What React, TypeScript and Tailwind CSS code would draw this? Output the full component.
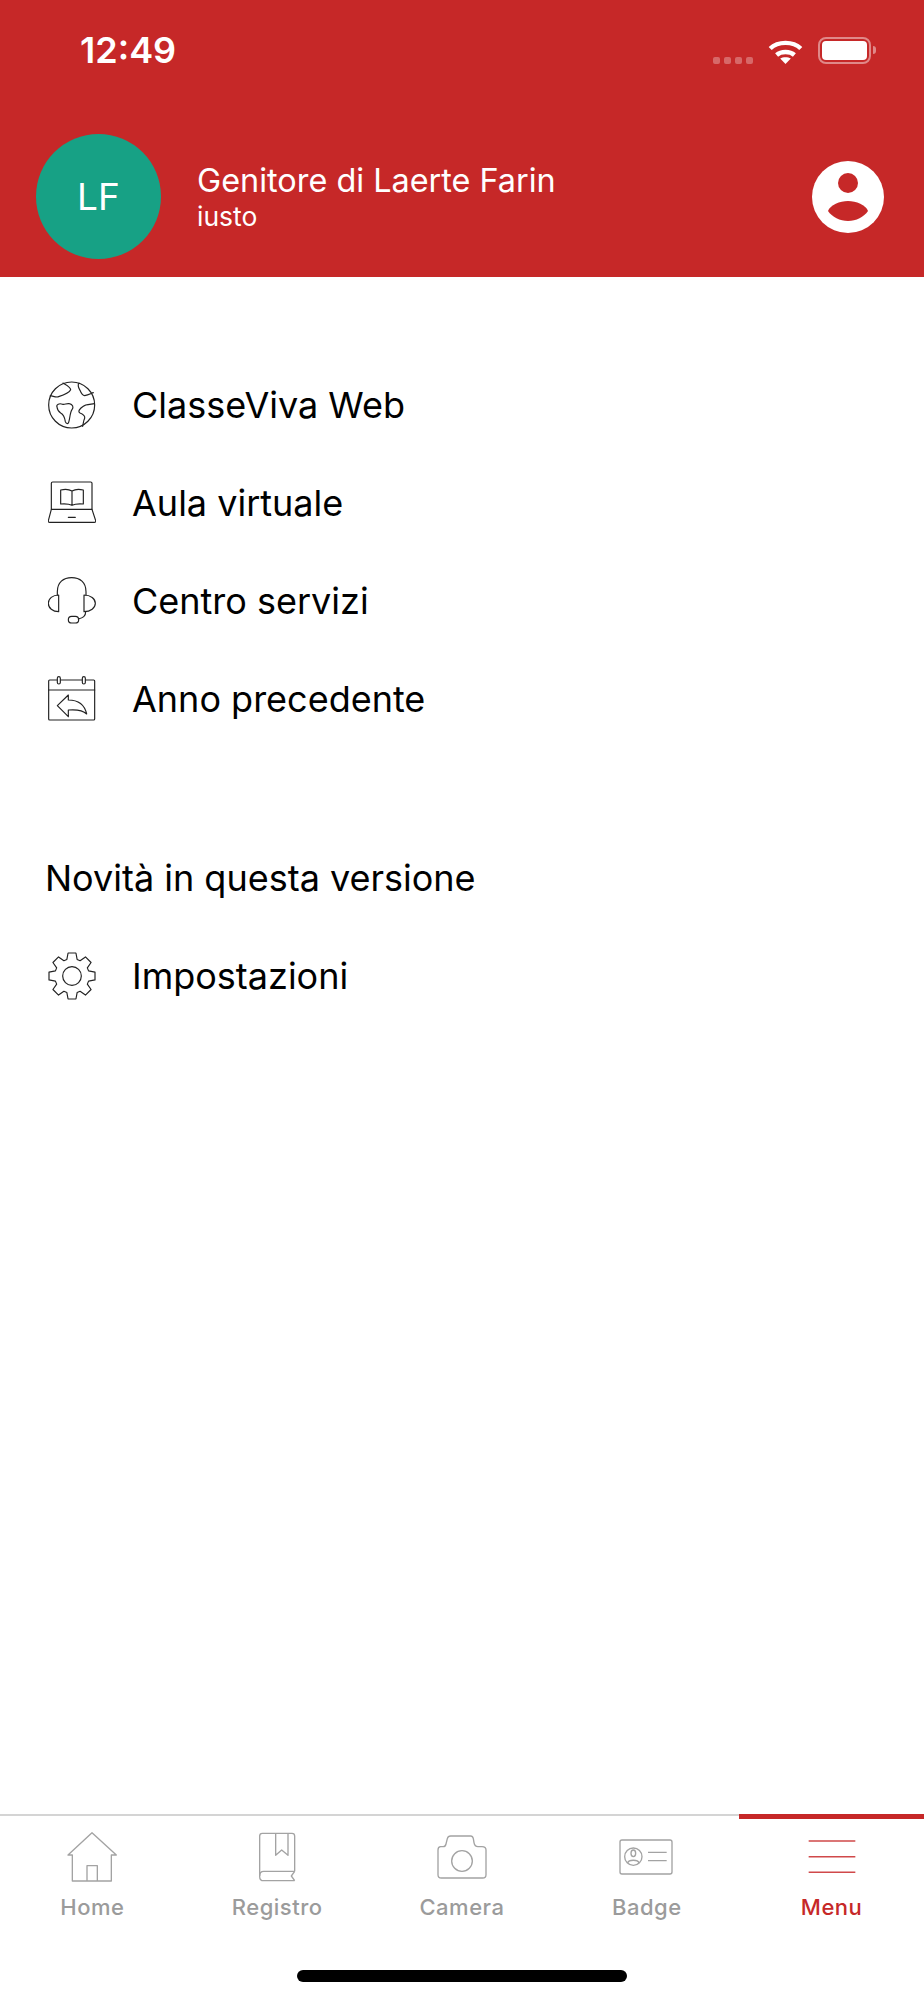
import type { ReactNode } from "react";

const font = "font-['Inter','Liberation_Sans',sans-serif]";

function gearPath() {
  // eight flat teeth around the centre of a 144 box
  const cx = 72;
  const cy = 72;
  const pts: string[] = [];
  for (let i = 0; i < 8; i++) {
    const a = (i * Math.PI) / 4 - Math.PI / 2;
    const list: [number, number][] = [
      [52, -0.3],
      [70, -0.17],
      [70, 0.17],
      [52, 0.3],
    ];
    for (const [r, d] of list) {
      const x = cx + r * Math.cos(a + d);
      const y = cy + r * Math.sin(a + d);
      pts.push(`${x.toFixed(1)} ${y.toFixed(1)}`);
    }
  }
  return `M${pts.join("L")}Z`;
}

function ListIcon({ children }: { children: ReactNode }) {
  return (
    <svg
      viewBox="0 0 144 144"
      className="h-12 w-12 shrink-0"
      fill="none"
      stroke="#222"
      strokeWidth={3.5}
      strokeLinejoin="round"
      strokeLinecap="round"
    >
      {children}
    </svg>
  );
}

function MenuRow({ icon, label }: { icon?: ReactNode; label: string }) {
  return (
    <div className="flex h-[98px] items-center gap-[36px] pl-[48px]">
      {icon}
      <span className="text-[36px] leading-none text-black">{label}</span>
    </div>
  );
}

function TabIcon({ children }: { children: ReactNode }) {
  return (
    <svg
      viewBox="0 0 180 162"
      className="h-[54px] w-[60px]"
      fill="none"
      stroke="#a3a3a3"
      strokeWidth={4}
      strokeLinejoin="round"
    >
      {children}
    </svg>
  );
}

function Tab({ label, active, children }: { label: string; active?: boolean; children: ReactNode }) {
  return (
    <div className="flex flex-col items-center pt-[14px]">
      {children}
      <span className={`mt-[8px] text-[22px] leading-[30px] font-medium tracking-[0.5px] ${active ? "text-[#c62828]" : "text-[#9b9b9b]"}`}>
        {label}
      </span>
    </div>
  );
}

export default function App() {
  return (
    <div className={`flex h-[2000px] w-[924px] flex-col bg-white ${font}`}>
      <header className="h-[277px] bg-[#c62828] text-white">
        <div className="flex h-[100px] items-center justify-between pr-[48px] pl-[80px]">
          <span className="text-[36px] leading-none font-semibold">12:49</span>
          <div className="flex items-end">
            <div className="mr-[15px] flex gap-[4px]">
              <span className="h-[7px] w-[7px] rounded-[2px] bg-white/30" />
              <span className="h-[7px] w-[7px] rounded-[2px] bg-white/30" />
              <span className="h-[7px] w-[7px] rounded-[2px] bg-white/30" />
              <span className="h-[7px] w-[7px] rounded-[2px] bg-white/30" />
            </div>
            <svg viewBox="0 0 35 26" className="mr-[15px] h-[26px] w-[35px]" fill="none" stroke="white" strokeWidth={4.4}>
              <path d="M2.2 10.5C10 3 25 3 32.8 10.5" />
              <path d="M8.6 17C13 13 22 13 26.4 17" />
              <path d="M12.2 20.6C15 18.8 20 18.8 22.8 20.6L17.5 26Z" fill="white" stroke="none" />
            </svg>
            <div className="flex items-center">
              <div className="h-[27px] w-[53px] rounded-[8px] border-2 border-white/45 p-[2px]">
                <div className="h-full w-full rounded-[4px] bg-white" />
              </div>
              <span className="ml-[2px] h-[8px] w-[3px] rounded-r-full bg-white/45" />
            </div>
          </div>
        </div>
        <div className="mt-[34px] flex items-center pr-[40px] pl-[36px]">
          <div className="flex h-[125px] w-[125px] items-center justify-center rounded-full bg-[#17a185] text-[37px]">LF</div>
          <div className="ml-[36px] flex-1">
            <div className="text-[32.4px] leading-[38px]">Genitore di Laerte Farin</div>
            <div className="text-[26.5px] leading-[32px]">iusto</div>
          </div>
          <svg viewBox="0 0 72 72" className="h-[72px] w-[72px]">
            <circle cx="36" cy="36" r="36" fill="white" />
            <circle cx="36" cy="22" r="10" fill="#c62828" />
            <path d="M16 50C18 44 28 40 36 40C44 40 54 44 56 50C52 56 44 60 36 60C28 60 20 56 16 50Z" fill="#c62828" />
          </svg>
        </div>
      </header>

      <main className="flex-1 pt-[79px]">
        <MenuRow
          label="ClasseViva Web"
          icon={
            <ListIcon>
              <circle cx="71" cy="72" r="69" />
              <path d="M45 6C55 12 68 18 68 26C62 38 40 44 28 48C20 48 10 44 7 44" />
              <path d="M93 6C88 12 90 18 96 28C100 38 106 44 110 44C120 42 128 38 136 35" />
              <path d="M27 78C24 70 34 66 44 70C50 72 56 66 64 68C74 70 78 78 72 86C66 94 66 112 62 124C60 130 54 128 52 122C50 108 46 100 38 96C32 92 28 86 27 78Z" />
              <path d="M139 68C125 70 110 70 106 76C96 82 88 92 96 96C106 100 112 104 110 112C106 120 106 128 104 136" />
            </ListIcon>
          }
        />
        <MenuRow
          label="Aula virtuale"
          icon={
            <ListIcon>
              <path d="M10 91V13Q10 9 14 9H128Q132 9 132 13V91Z" />
              <path d="M10 91L1 125Q0 130 5 130H139Q144 130 143 125L132 91" />
              <path d="M61 115H82" />
              <path d="M72 36C62 30 50 30 38 33V75C50 74 62 74 72 79C82 74 94 74 106 75V33C94 30 82 30 72 36ZM72 36V79" />
            </ListIcon>
          }
        />
        <MenuRow
          label="Centro servizi"
          icon={
            <ListIcon>
              <path d="M28 54V44C28 16 46 2 71 2C96 2 114 16 114 44V54" />
              <path d="M32 54V104C14 104 1 93 1 79C1 65 14 54 32 54Z" />
              <path d="M108 54V104C128 104 142 93 142 79C142 65 128 54 108 54Z" />
              <path d="M113 104C113 118 105 122 91 126" />
              <rect x="61" y="118" width="31" height="20" rx="10" />
            </ListIcon>
          }
        />
        <MenuRow
          label="Anno precedente"
          icon={
            <ListIcon>
              <rect x="2" y="15" width="138" height="120" rx="3" />
              <path d="M2 45H140" />
              <rect x="28" y="5" width="9" height="22" rx="4.5" fill="white" />
              <rect x="103" y="5" width="9" height="22" rx="4.5" fill="white" />
              <path d="M28 92L61 60V75C90 75 110 90 116 117C105 106 85 103 61 105V125Z" />
            </ListIcon>
          }
        />
        <div className="mt-[81px] flex h-[98px] items-center pl-[45px]">
          <span className="text-[36px] leading-none text-black">Novità in questa versione</span>
        </div>
        <MenuRow
          label="Impostazioni"
          icon={
            <ListIcon>
              <path d={gearPath()} />
              <circle cx="72" cy="72" r="28" />
            </ListIcon>
          }
        />
      </main>

      <footer className="relative h-[186px] border-t-2 border-[#d4d4d4]">
        <div className="grid grid-cols-5">
          <Tab label="Home">
            <TabIcon>
              <path d="M90 8L18 75H31V153H148V75H163Z" />
              <path d="M75 153V107H106V153" />
            </TabIcon>
          </Tab>
          <Tab label="Registro">
            <TabIcon>
              <path d="M143 124V18Q143 10 135 10H46Q38 10 38 18V140Q38 152 50 152H143" />
              <path d="M143 124H50Q38 124 38 138" />
              <path d="M143 124L133 138L143 152" />
              <path d="M86 10V76L104 60L123 76V10" />
            </TabIcon>
          </Tab>
          <Tab label="Camera">
            <TabIcon>
              <path d="M26 50H34Q40 50 42 42L46 26Q48 18 56 18H116Q122 18 124 26L126 38Q128 50 138 50H150Q162 50 162 60V134Q162 144 152 144H28Q18 144 18 134V60Q18 50 26 50Z" />
              <circle cx="90" cy="93" r="31" />
            </TabIcon>
          </Tab>
          <Tab label="Badge">
            <TabIcon>
              <rect x="9" y="30" width="156" height="102" rx="6" />
              <circle cx="49" cy="80" r="26" />
              <ellipse cx="49" cy="70" rx="7" ry="10" />
              <path d="M32 99C35 88 63 88 66 99" />
              <path d="M93 67H149M93 92H149" />
            </TabIcon>
          </Tab>
          <Tab label="Menu" active>
            <svg viewBox="0 0 180 162" className="h-[54px] w-[60px]" fill="none" stroke="#d0494a" strokeWidth={4.5}>
              <path d="M20 33H160M20 80H160M20 127H160" />
            </svg>
          </Tab>
        </div>
        <div className="absolute -top-[2px] right-0 h-[5px] w-[185px] bg-[#c62828]" />
        <div className="absolute bottom-[18px] left-[297px] h-[12px] w-[330px] rounded-full bg-black" />
      </footer>
    </div>
  );
}
